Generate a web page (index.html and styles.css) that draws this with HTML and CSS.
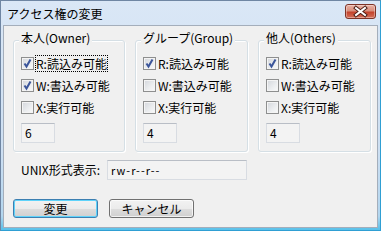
FILE: index.html
```html
<!DOCTYPE html>
<html lang="ja">
<head>
<meta charset="utf-8">
<title>アクセス権の変更</title>
<link rel="stylesheet" href="styles.css">
</head>
<body>
<div class="window">
  <div class="titlebar">
    <span class="title">アクセス権の変更</span>
    <span class="close">
      <svg width="29" height="13" viewBox="0 0 29 13">
        <path d="M10 3 L19 10 M19 3 L10 10" stroke="#4a1c14" stroke-width="4" stroke-linecap="square" fill="none"/>
        <path d="M10 3 L19 10 M19 3 L10 10" stroke="#ffffff" stroke-width="2" stroke-linecap="square" fill="none"/>
      </svg>
    </span>
  </div>
  <div class="client">
    <div class="groups">
      <div class="group g1">
        <span class="legend">本人(Owner)</span>
        <div class="row"><span class="cb"><svg width="11" height="11" viewBox="0 0 11 11"><path d="M2.5 5.5 L4.5 8.5 L8.5 1.5" stroke="#3b559a" stroke-width="2" fill="none"/></svg></span><span class="lbl focus">R:読込み可能</span></div>
        <div class="row"><span class="cb"><svg width="11" height="11" viewBox="0 0 11 11"><path d="M2.5 5.5 L4.5 8.5 L8.5 1.5" stroke="#3b559a" stroke-width="2" fill="none"/></svg></span><span class="lbl">W:書込み可能</span></div>
        <div class="row"><span class="cb"></span><span class="lbl">X:実行可能</span></div>
        <div class="num">6</div>
      </div>
      <div class="group g2">
        <span class="legend">グループ(Group)</span>
        <div class="row"><span class="cb"><svg width="11" height="11" viewBox="0 0 11 11"><path d="M2.5 5.5 L4.5 8.5 L8.5 1.5" stroke="#3b559a" stroke-width="2" fill="none"/></svg></span><span class="lbl">R:読込み可能</span></div>
        <div class="row"><span class="cb"></span><span class="lbl">W:書込み可能</span></div>
        <div class="row"><span class="cb"></span><span class="lbl">X:実行可能</span></div>
        <div class="num">4</div>
      </div>
      <div class="group g3">
        <span class="legend">他人(Others)</span>
        <div class="row"><span class="cb"><svg width="11" height="11" viewBox="0 0 11 11"><path d="M2.5 5.5 L4.5 8.5 L8.5 1.5" stroke="#3b559a" stroke-width="2" fill="none"/></svg></span><span class="lbl">R:読込み可能</span></div>
        <div class="row"><span class="cb"></span><span class="lbl">W:書込み可能</span></div>
        <div class="row"><span class="cb"></span><span class="lbl">X:実行可能</span></div>
        <div class="num">4</div>
      </div>
    </div>
    <div class="unix">
      <span class="unix-label">UNIX形式表示:</span>
      <div class="field">rw-r--r--</div>
    </div>
    <div class="buttons">
      <button class="btn default">変更</button>
      <button class="btn">キャンセル</button>
    </div>
  </div>
</div>
</body>
</html>
```
FILE: styles.css
```css
html, body {
  margin: 0;
  padding: 0;
  background: #ffffff;
}
body {
  font-family: "Noto Sans CJK JP", "Noto Sans", sans-serif;
  font-size: 12px;
  color: #000;
}
.window {
  width: 381px;
  height: 231px;
  box-sizing: border-box;
  border: 1px solid #6f86a3;
  border-right-color: #2f9fd3;
  border-bottom-color: #2f9fd3;
  background: linear-gradient(to bottom, #dae7f6 0px, #cddff2 150px, #b3d6ef 215px, #5cc2ea 228px);
  padding: 0 2px 2px 2px;
  display: flex;
  flex-direction: column;
}
.titlebar {
  height: 24px;
  flex: none;
  display: flex;
  justify-content: space-between;
  align-items: flex-start;
  padding: 0 2px 0 4px;
}
.title {
  margin-top: 5px;
  line-height: 16px;
  font-size: 12px;
}
.close {
  margin-top: 3px;
  width: 29px;
  height: 13px;
  border: 1px solid #7e3326;
  border-radius: 3px;
  background: linear-gradient(to bottom, #eab1a3 0%, #d88f7d 45%, #c3432c 55%, #d4705a 100%);
  box-shadow: inset 0 0 0 1px rgba(255,255,255,0.35);
  display: flex;
}
.client {
  flex: 1;
  border: 1px solid #a4aebb;
  background: #f0f0f0;
  padding: 14px 0 0 9px;
  display: flex;
  flex-direction: column;
}
.groups {
  display: flex;
  gap: 10px;
}
.group {
  position: relative;
  box-sizing: border-box;
  height: 112px;
  border: 1px solid #d5dfe5;
  border-radius: 3px;
  box-shadow: inset 1px 1px 0 #ffffff, 1px 1px 0 #ffffff;
  padding: 11px 0 0 7px;
}
.g1 { width: 112px; }
.g2 { width: 113px; }
.g3 { width: 113px; }
.legend {
  position: absolute;
  top: -10px;
  left: 5px;
  padding: 0 2px;
  line-height: 14px;
  background: #f0f0f0;
  white-space: nowrap;
}
.row {
  height: 22px;
  display: flex;
  align-items: center;
}
.cb {
  width: 11px;
  height: 11px;
  border: 1px solid #8e8f8f;
  background: linear-gradient(135deg, #d3d6db 0%, #eceef0 60%, #fafafa 100%);
  box-shadow: inset 0 0 0 1px #f4f4f4;
  display: flex;
  flex: none;
}
.lbl {
  margin-left: 1px;
  border: 1px solid transparent;
  line-height: 15px;
  padding: 0;
  white-space: nowrap;
}
.lbl.focus {
  border: 1px dotted #000;
}
.num {
  margin-top: 5px;
  width: 34px;
  height: 20px;
  box-sizing: border-box;
  border: 1px solid #d8dce2;
  border-top-color: #b9bec6;
  background: #f3f3f3;
  padding-left: 3px;
  line-height: 18px;
}
.unix {
  margin-top: 8px;
  display: flex;
  align-items: center;
  padding-left: 8px;
}
.unix-label {
  width: 86px;
  line-height: 20px;
  white-space: nowrap;
}
.field {
  width: 140px;
  height: 20px;
  box-sizing: border-box;
  border: 1px solid #d8dce2;
  border-top-color: #b9bec6;
  background: #f3f3f3;
  padding-left: 3px;
  font-size: 11px;
  line-height: 18px;
  letter-spacing: 1px;
}
.buttons {
  margin-top: 19px;
  display: flex;
  gap: 11px;
}
.btn {
  width: 85px;
  height: 19px;
  box-sizing: border-box;
  margin: 0;
  padding: 0;
  font-family: inherit;
  font-size: 12px;
  line-height: 16px;
  color: #000;
  border: 1px solid #707070;
  border-radius: 3px;
  background: linear-gradient(to bottom, #f2f2f2 0%, #ebebeb 50%, #dddddd 51%, #cfcfcf 100%);
  box-shadow: inset 0 0 0 1px rgba(255,255,255,0.7);
}
.btn.default {
  border-color: #3c7fb1;
  box-shadow: inset 0 0 0 1px #5fd3fa;
}
```
